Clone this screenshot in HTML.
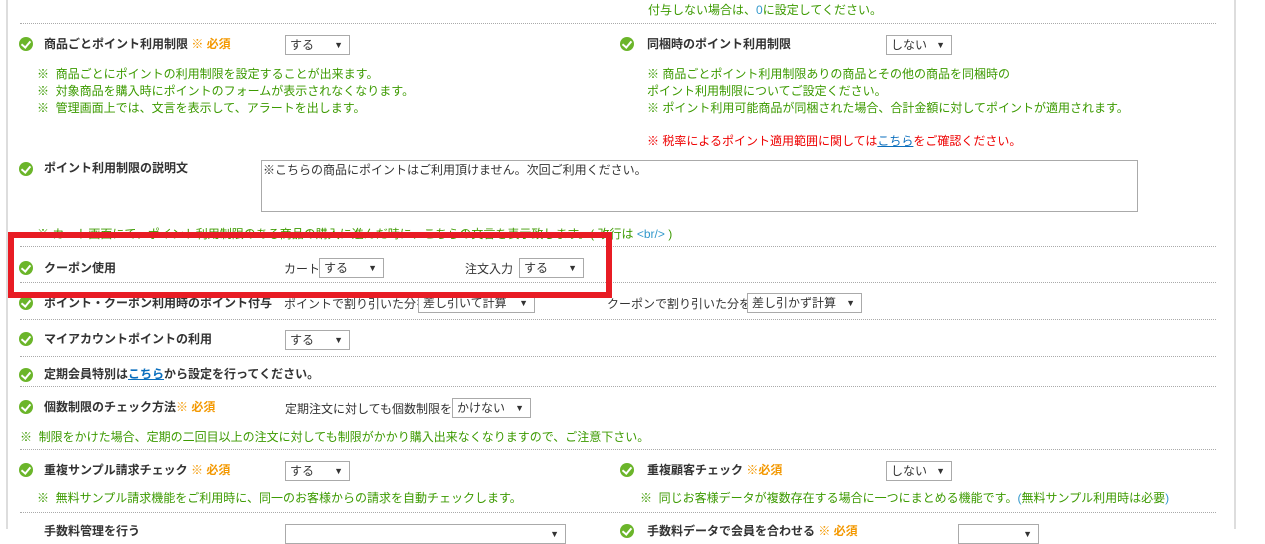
<!DOCTYPE html><html><head><meta charset="utf-8"><style>
body{margin:0;width:1265px;height:529px;overflow:hidden;background:#fff;font-family:"Liberation Sans","Noto Sans CJK JP",sans-serif;font-size:12px;color:#333;position:relative}
.a{position:absolute;white-space:nowrap;line-height:14px}
.b{font-weight:bold}
.g{color:#3c9a00}
.o{color:#f39800;font-weight:bold}
.r{color:#e00}
.dl{position:absolute;left:20px;width:1196px;border-top:1px dotted #aaa;height:0}
.ic{position:absolute;width:14px;height:14px;border-radius:50%;background:#6bb52a}
.ic:after{content:"";position:absolute;left:4px;top:2px;width:4px;height:7px;border:solid #fff;border-width:0 2px 2px 0;transform:rotate(40deg)}
.s{position:absolute;height:18px;border:1px solid #aaa;background:#fff;font-size:12px;line-height:18px;padding-left:4px;box-sizing:content-box}
.s:after{content:"▼";position:absolute;right:6px;top:0;font-size:9px}
a{color:#0a6ebd;text-decoration:underline}
</style></head><body>
<div style="position:absolute;left:6px;top:0;width:2px;height:529px;background:#ddd"></div>
<div style="position:absolute;left:1234px;top:0;width:2px;height:529px;background:#ddd"></div>
<div class="a g" style="left:648px;top:3px">付与しない場合は、<span style="color:#39c">0</span>に設定してください。</div>
<div class="dl" style="top:23px"></div>
<div class="ic" style="left:19px;top:37px"></div>
<div class="a b" style="left:44px;top:37px">商品ごとポイント利用制限 <span class="o">※ 必須</span></div>
<div class="s" style="left:285px;top:35px;width:59px">する</div>
<div class="a g" style="left:37px;top:66px;line-height:17px">※&nbsp; 商品ごとにポイントの利用制限を設定することが出来ます。<br>※&nbsp; 対象商品を購入時にポイントのフォームが表示されなくなります。<br>※&nbsp; 管理画面上では、文言を表示して、アラートを出します。</div>
<div class="ic" style="left:620px;top:37px"></div>
<div class="a b" style="left:647px;top:37px">同梱時のポイント利用制限</div>
<div class="s" style="left:886px;top:35px;width:60px">しない</div>
<div class="a g" style="left:647px;top:66px;line-height:17px">※ 商品ごとポイント利用制限ありの商品とその他の商品を同梱時の<br>ポイント利用制限についてご設定ください。<br>※ ポイント利用可能商品が同梱された場合、合計金額に対してポイントが適用されます。</div>
<div class="a r" style="left:647px;top:134px">※ 税率によるポイント適用範囲に関しては<a>こちら</a>をご確認ください。</div>
<div class="ic" style="left:19px;top:162px"></div>
<div class="a b" style="left:44px;top:161px">ポイント利用制限の説明文</div>
<div style="position:absolute;left:261px;top:160px;width:875px;height:50px;border:1px solid #aaa"></div>
<div class="a" style="left:263px;top:163px">※こちらの商品にポイントはご利用頂けません。次回ご利用ください。</div>
<div class="a g" style="left:37px;top:227px">※ カート画面にて、ポイント利用制限のある商品の購入に進んだ時に、こちらの文言を表示致します。( 改行は <span style="color:#39c">&lt;br/&gt;</span> )</div>
<div class="dl" style="top:246px"></div>
<div class="ic" style="left:19px;top:261px"></div>
<div class="a b" style="left:44px;top:261px">クーポン使用</div>
<div class="a" style="left:284px;top:262px">カート</div>
<div class="s" style="left:319px;top:258px;width:59px">する</div>
<div class="a" style="left:465px;top:262px">注文入力</div>
<div class="s" style="left:519px;top:258px;width:59px">する</div>
<div class="dl" style="top:282px"></div>
<div class="ic" style="left:19px;top:296px"></div>
<div class="a b" style="left:44px;top:296px">ポイント・クーポン利用時のポイント付与</div>
<div class="a" style="left:284px;top:297px">ポイントで割り引いた分を</div>
<div class="s" style="left:418px;top:293px;width:111px">差し引いて計算</div>
<div class="a" style="left:607px;top:297px">クーポンで割り引いた分を</div>
<div class="s" style="left:747px;top:293px;width:109px">差し引かず計算</div>
<div style="position:absolute;left:8px;top:232px;width:592px;height:54px;border:6px solid #e81c24"></div>
<div class="dl" style="top:319px"></div>
<div class="ic" style="left:19px;top:332px"></div>
<div class="a b" style="left:44px;top:332px">マイアカウントポイントの利用</div>
<div class="s" style="left:285px;top:330px;width:59px">する</div>
<div class="dl" style="top:356px"></div>
<div class="ic" style="left:19px;top:368px"></div>
<div class="a b" style="left:44px;top:367px">定期会員特別は<a>こちら</a>から設定を行ってください。</div>
<div class="dl" style="top:386px"></div>
<div class="ic" style="left:19px;top:400px"></div>
<div class="a b" style="left:44px;top:400px">個数制限のチェック方法<span class="o">※ 必須</span></div>
<div class="a" style="left:285px;top:402px">定期注文に対しても個数制限を</div>
<div class="s" style="left:452px;top:398px;width:73px">かけない</div>
<div class="a g" style="left:20px;top:430px">※&nbsp; 制限をかけた場合、定期の二回目以上の注文に対しても制限がかかり購入出来なくなりますので、ご注意下さい。</div>
<div class="dl" style="top:449px"></div>
<div class="ic" style="left:19px;top:463px"></div>
<div class="a b" style="left:44px;top:463px">重複サンプル請求チェック <span class="o">※ 必須</span></div>
<div class="s" style="left:285px;top:461px;width:59px">する</div>
<div class="a g" style="left:37px;top:491px">※&nbsp; 無料サンプル請求機能をご利用時に、同一のお客様からの請求を自動チェックします。</div>
<div class="ic" style="left:620px;top:463px"></div>
<div class="a b" style="left:647px;top:463px">重複顧客チェック <span class="o">※必須</span></div>
<div class="s" style="left:886px;top:461px;width:60px">しない</div>
<div class="a g" style="left:640px;top:491px">※&nbsp; 同じお客様データが複数存在する場合に一つにまとめる機能です。<span style="color:#39c">(</span>無料サンプル利用時は必要<span style="color:#39c">)</span></div>
<div class="dl" style="top:512px"></div>
<div class="a b" style="left:44px;top:524px">手数料管理を行う</div>
<div class="s" style="left:285px;top:524px;width:275px"></div>
<div class="ic" style="left:620px;top:524px"></div>
<div class="a b" style="left:647px;top:524px">手数料データで会員を合わせる <span class="o">※ 必須</span></div>
<div class="s" style="left:958px;top:524px;width:75px"></div>
</body></html>
